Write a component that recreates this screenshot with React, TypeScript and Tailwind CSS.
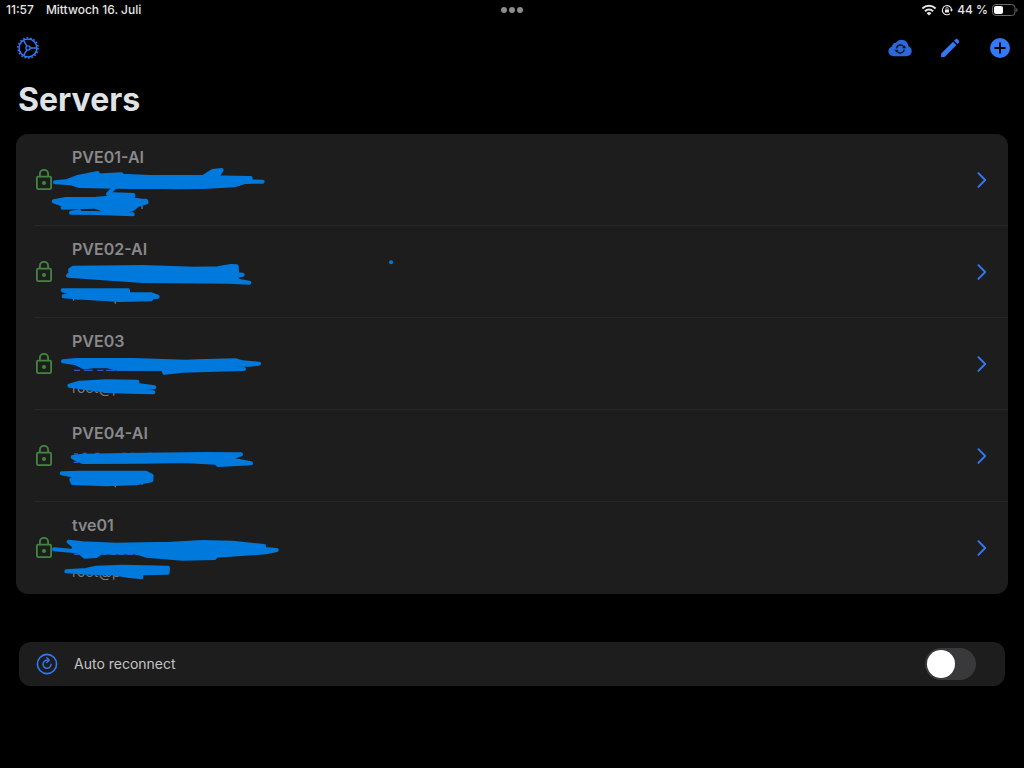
import { ReactNode, useState } from "react";

interface Server {
  name: string;
  user?: string;
  // Filled scribbles that cover the address and the user
  marks: string[];
  // Thin single pen strokes
  lines?: string;
  // What is left of the address beside the pen
  rests?: string;
  // What is left of the user name beside the pen
  userRests?: string;
}

const servers: Server[] = [
  {
    name: "PVE01-AI",
    marks: [
      "M117 145L150 142L182 130L245 117L234 125L316 121L320 125L400 129L562 129L590 111L617 108L610 119L585 130L704 132L704 142L740 143L685 144L655 154L560 159L480 160L400 158L340 159L190 156L165 148Z",
      "M113 202L150 195L240 194L352 186L350 196L375 200L390 200L392 205L365 213L350 226L330 230L270 230L235 218L140 221L140 212Z",
    ],
    lines: "M298 158L276 180L352 183M165 236L240 237L350 241M165 236L190 232",
    userRests: "M378 216V225M247 222V225",
  },
  {
    name: "PVE02-AI",
    marks: [
      "M172 125L380 123L535 128L605 127L645 120L662 121L664 145L680 146L660 150L665 164L700 170L640 167L380 165L260 157L156 149L164 141L162 132Z",
      "M140 193L336 193L336 205L406 205L425 212L408 214L405 220L310 222L265 219L200 215L143 211L180 205Z",
    ],
    userRests: "M173 204V224M186 217V221M298 224V233",
  },
  {
    name: "PVE03",
    user: "root@p",
    marks: [
      "M141 130L180 126L350 126L512 131L540 130L660 127L680 133L729 137L700 140L600 142L684 153L600 155L500 158L445 164L440 153L300 152L275 145L240 144L205 148L180 136Z",
      "M160 203L190 194L270 190L364 191L364 201L415 208L340 212L412 223L340 221L270 218L215 211Z",
    ],
    rests: "M174 157H192M204 157H230M244 157H262M270 157H296M304 157H440",
    userRests: "M378 213V219",
  },
  {
    name: "PVE04-AI",
    marks: [
      "M170 141L200 137L380 134L570 132L675 133L655 140L656 151L705 160L606 165L600 158L500 153L380 155L200 156L184 150Z",
      "M137 190L190 188L390 188L407 197L406 211L360 220L270 223L170 219L166 209L185 200Z",
    ],
    rests:
      "M174 132H186M200 130H212M238 130H250M318 130H330M344 130H354M397 130H406M173 157H187M414 157H440M448 157H462M484 156H489",
    userRests: "M298 225V232M378 219V224",
  },
  {
    name: "tve01",
    user: "root@p",
    marks: [
      "M158 119L200 124L300 128L465 125L560 120L650 122L744 132L744 141L782 144L750 151L600 161L596 168L500 170L390 161L360 151L255 152L240 162L206 164L190 150L170 147L175 133Z",
      "M151 208L210 204L240 197L320 194L456 197L455 212L376 214L376 226L340 222L290 214L215 212Z",
    ],
    lines: "M114 142L172 147",
    rests: "M174 157H192M262 157H270M284 157H300M308 157H324M334 157H350M358 157H380",
  },
];

const WifiIcon = () => (
  <svg className="h-3 w-4" viewBox="0 0 16 12" fill="none" stroke="currentColor">
    <path d="M1.4 4.5a9.6 9.6 0 0 1 13.2 0" strokeWidth="2" />
    <path d="M4 7.2a5.8 5.8 0 0 1 8 0" strokeWidth="2" />
    <path d="M8 11.6 5.6 9.2a3.5 3.5 0 0 1 4.8 0Z" fill="currentColor" stroke="none" />
  </svg>
);

const RotationLockIcon = () => (
  <svg className="size-3" viewBox="0 0 12 12" fill="none" stroke="currentColor">
    <path d="M9.1 9.6A4.6 4.6 0 1 1 10.6 6" strokeWidth="1.1" />
    <path d="M8.9 5.5h3.1l-1.5 2.2Z" fill="currentColor" stroke="none" />
    <rect x="4" y="5.4" width="4" height="3" rx=".5" fill="currentColor" stroke="none" />
    <path d="M4.8 5.6V4.7a1.2 1.2 0 0 1 2.4 0v.9" strokeWidth=".8" />
  </svg>
);

const BatteryIcon = () => (
  <svg className="h-3 w-[26px]" viewBox="0 0 26 12" fill="none">
    <rect x=".5" y=".5" width="22.5" height="11" rx="3.4" stroke="#6b6b6b" />
    <rect x="2" y="2" width="9" height="8" rx="2" fill="#fff" />
    <path d="M24.3 4v4a2.2 2.2 0 0 0 0-4Z" fill="#6b6b6b" />
  </svg>
);

const GearIcon = () => (
  <svg className="size-6" viewBox="0 0 24 24" fill="none" stroke="currentColor">
    <circle cx="12" cy="12" r="8.9" strokeWidth="1.5" />
    <circle cx="12" cy="12" r="10.1" strokeWidth="1.4" strokeDasharray="1.76 1.76" />
    <circle cx="12" cy="12" r="2.1" strokeWidth="1.3" />
    <path d="M14.1 12H21M10.9 10.2 7.5 4.3M10.9 13.8l-3.4 5.9" strokeWidth="1.4" />
  </svg>
);

const CloudSyncIcon = () => (
  <svg className="h-[18px] w-6" viewBox="0 0 25 18">
    <path
      d="M6.1 17.6C2.7 17.6.4 15.4.4 12.5.4 10 2 8 4.2 7.4 4.3 5 6.1 3.4 8.3 3.5 9.5 1.5 11.7.4 14.1.4 18 .4 21 3.3 21.3 7.2 23.4 8 24.7 9.9 24.7 12.2 24.7 15.3 22.3 17.6 19 17.6Z"
      fill="#2c68d8"
    />
    <g fill="none" stroke="#06122b" strokeWidth="1.5">
      <path d="M8.8 9.3a4.2 4.2 0 0 1 7.5-1.8M17 10.7a4.2 4.2 0 0 1-7.5 1.8" />
    </g>
    <path d="M14.7 9.2h4.4L17 6.3ZM11.1 10.8H6.7l2.1 2.9Z" fill="#06122b" />
  </svg>
);

const PencilIcon = () => (
  <svg className="size-5" viewBox="0 0 20 20" fill="currentColor">
    <path d="M1.2 15.5 13 3.7 16.4 7.1 4.6 18.9 1 19.1Z" />
    <path d="M14 2.7 15.5 1.3a1.5 1.5 0 0 1 2.1 0l1.2 1.2a1.5 1.5 0 0 1 0 2.1L17.4 6.1Z" />
  </svg>
);

const PlusIcon = () => (
  <svg className="size-5" viewBox="0 0 20 20">
    <circle cx="10" cy="10" r="10" fill="currentColor" />
    <path d="M10 5.2v9.6M5.2 10h9.6" stroke="#000" strokeWidth="1.9" strokeLinecap="round" />
  </svg>
);

const LockIcon = () => (
  <svg className="h-[22px] w-4" viewBox="0 0 16 22" fill="none" stroke="currentColor" strokeWidth="1.8">
    <rect x=".9" y="7.6" width="14.2" height="12.6" rx="1.4" />
    <path d="M3.9 7.4V4.9a4.1 4.1 0 0 1 8.2 0v2.5" />
    <circle cx="8" cy="13.9" r="2" fill="currentColor" stroke="none" />
  </svg>
);

const ChevronIcon = () => (
  <svg className="h-4 w-[10px]" viewBox="0 0 10 16" fill="none" stroke="currentColor" strokeWidth="1.9">
    <path d="m1.4 1.2 6.8 6.8-6.8 6.8" strokeLinecap="round" strokeLinejoin="round" />
  </svg>
);

const ReconnectIcon = () => (
  <svg className="size-[22px]" viewBox="0 0 22 22" fill="none" stroke="currentColor">
    <circle cx="11" cy="11" r="9.6" strokeWidth="1.6" />
    <path d="M11.4 7.3a4 4 0 1 0 3.6 4" strokeWidth="1.4" strokeLinecap="round" />
    <path d="m10.8 4.8 2.5 2.5-2.5 2.3" strokeWidth="1.3" strokeLinecap="round" strokeLinejoin="round" />
  </svg>
);

const IconButton = ({ label, children }: { label: string; children: ReactNode }) => (
  <button
    type="button"
    aria-label={label}
    className="flex h-6 w-6 items-center justify-center text-[#3478f6]"
  >
    {children}
  </button>
);

const Scribble = ({ server, dot }: { server: Server; dot: boolean }) => (
  <svg
    className="pointer-events-none absolute top-0 left-0 h-[92px] w-[280px] overflow-visible"
    viewBox="0 0 840 276"
    fill="none"
    aria-hidden="true"
  >
    {server.rests && <path d={server.rests} stroke="#3457c8" strokeWidth="4" />}
    {server.userRests && <path d={server.userRests} stroke="#77777b" strokeWidth="4" />}
    <g stroke="#0079dc" strokeWidth="12" strokeLinecap="round" strokeLinejoin="round">
      {server.marks.map((d) => (
        <path key={d} d={d} fill="#0079dc" />
      ))}
      {server.lines && <path d={server.lines} />}
      {dot && <path d="M1125 109h.1" />}
    </g>
  </svg>
);

const ServerRow = ({ server, dot, last }: { server: Server; dot: boolean; last: boolean }) => (
  <li className="relative">
    <a href="#" className="flex h-[92px] pl-5">
      <span className="flex items-center text-[#43853f]">
        <LockIcon />
      </span>
      <span className="flex flex-1 items-center justify-between pr-[21px]">
        <span className="flex h-full flex-col gap-[27px] pt-[13px] pl-5">
          <span className="text-base leading-5 font-semibold text-[#89898c]">{server.name}</span>
          {server.user && (
            <span className="text-sm leading-5 text-[#7b7b7e]">{server.user}</span>
          )}
        </span>
        <span className="text-[#3478f6]">
          <ChevronIcon />
        </span>
      </span>
    </a>
    {!last && <div className="absolute right-0 bottom-0 left-[18px] h-px bg-[#272728]" />}
    <Scribble server={server} dot={dot} />
  </li>
);

const App = () => {
  const [autoReconnect, setAutoReconnect] = useState<boolean>(false);

  return (
    <div className="min-h-screen bg-black font-['Inter',sans-serif] text-white">
      <div className="grid h-5 grid-cols-[1fr_auto_1fr] items-center pr-1.5 pl-1.5 text-xs leading-5 font-medium text-[#e6e6e6]">
        <div className="flex gap-3">
          <span>11:57</span>
          <span>Mittwoch 16. Juli</span>
        </div>
        <button type="button" aria-label="Multitasking" className="flex gap-0.5">
          <span className="size-1.5 rounded-full bg-[#8c8c8c]" />
          <span className="size-1.5 rounded-full bg-[#8c8c8c]" />
          <span className="size-1.5 rounded-full bg-[#8c8c8c]" />
        </button>
        <div className="flex items-center justify-end gap-1">
          <WifiIcon />
          <RotationLockIcon />
          <span>44 %</span>
          <BatteryIcon />
        </div>
      </div>

      <header>
        <nav className="flex items-center justify-between px-3 pt-4 pl-4">
          <IconButton label="Settings">
            <GearIcon />
          </IconButton>
          <div className="flex gap-[26px]">
            <IconButton label="Sync">
              <CloudSyncIcon />
            </IconButton>
            <IconButton label="Edit">
              <PencilIcon />
            </IconButton>
            <IconButton label="Add server">
              <PlusIcon />
            </IconButton>
          </div>
        </nav>
        <h1 className="px-[18px] pt-5 text-[32px] leading-10 font-bold text-[#dfe3e6]">
          Servers
        </h1>
      </header>

      <main className="px-4 pt-[14px]">
        <ul className="overflow-hidden rounded-xl bg-[#1d1d1d]">
          {servers.map((server, i) => (
            <ServerRow
              key={server.name}
              server={server}
              dot={i === 1}
              last={i === servers.length - 1}
            />
          ))}
        </ul>

        <div className="mx-[3px] mt-12 flex h-11 items-center rounded-xl bg-[#1d1d1d] pr-[29px] pl-[17px]">
          <span className="text-[#3478f6]">
            <ReconnectIcon />
          </span>
          <label htmlFor="auto-reconnect" className="flex-1 pl-4 text-sm text-[#c4c4c6]">
            Auto reconnect
          </label>
          <input
            type="checkbox"
            role="switch"
            id="auto-reconnect"
            checked={autoReconnect}
            onChange={(e) => {
              setAutoReconnect(e.currentTarget.checked);
            }}
            className="flex h-8 w-[51px] appearance-none items-center rounded-full bg-[#39393b] px-0.5 before:size-7 before:rounded-full before:bg-white checked:justify-end checked:bg-[#34c759]"
          />
        </div>
      </main>
    </div>
  );
};

export default App;
